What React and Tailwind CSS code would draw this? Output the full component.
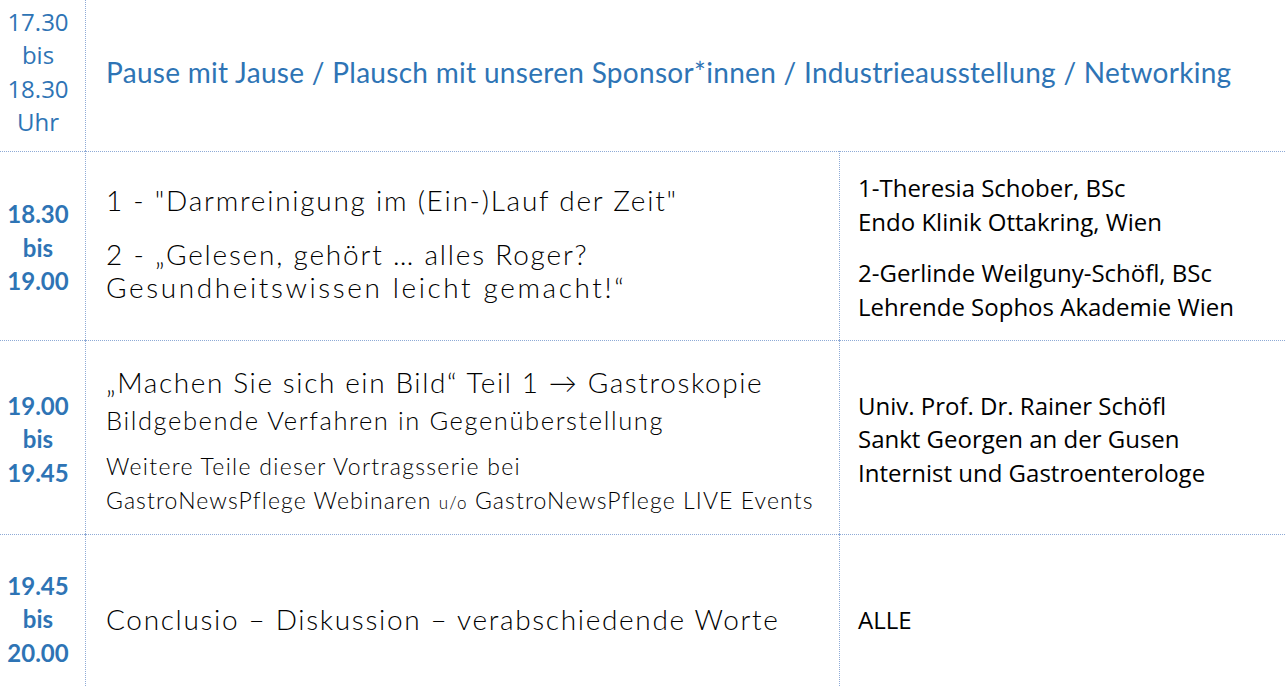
const blue = 'text-[#2e74b5]';
const line = 'border-dotted border-[#8eaad6]';
const regular = { fontFamily: '"Open Sans", Lato, sans-serif' };

function TimeCell({ lines, bold }) {
  return (
    <div
      className={`flex flex-col items-center justify-center pr-[9px] text-[24px] leading-[33.5px] ${blue} ${bold ? 'font-bold' : 'font-normal'}`}
      style={bold ? undefined : regular}
    >
      {lines.map((l, i) => (
        <span key={i}>{l}</span>
      ))}
    </div>
  );
}

export default function App() {
  return (
    <div className="h-[686px] w-[1285px] overflow-hidden bg-white text-black" style={{ fontFamily: 'Lato, "Open Sans", sans-serif' }}>
      <div className="grid grid-cols-[85px_754px_446px] grid-rows-[151px_189px_194px_166px]">
        {/* Row 1 */}
        <div className="flex items-center justify-center pb-[8px]">
          <TimeCell lines={['17.30', 'bis', '18.30', 'Uhr']} />
        </div>
        <div className={`col-span-2 flex items-center border-l ${line} pl-[20px] pb-[8px]`}>
          <span className={`text-[28px] tracking-[0.3px] ${blue}`}>
            Pause mit Jause / Plausch mit unseren Sponsor*innen / Industrieausstellung / Networking
          </span>
        </div>

        {/* Row 2 */}
        <div className={`flex items-center justify-center border-t ${line} pt-[3px]`}>
          <TimeCell lines={['18.30', 'bis', '19.00']} bold />
        </div>
        <div className={`flex flex-col justify-center gap-[21px] border-l border-t ${line} pl-[20px] pb-[5px] text-[28px] font-light leading-[33px]`}>
          <p className="tracking-[1.75px]">1 - "Darmreinigung im (Ein-)Lauf der Zeit"</p>
          <div>
            <p className="tracking-[1.8px]">2 - „Gelesen, gehört … alles Roger?</p>
            <p className="tracking-[2.6px]">Gesundheitswissen leicht gemacht!“</p>
          </div>
        </div>
        <div
          className={`flex flex-col justify-center gap-[17px] border-l border-t ${line} pl-[18px] pt-[3px] text-[24px] leading-[34px]`}
          style={regular}
        >
          <p>
            1-Theresia Schober, BSc
            <br />
            Endo Klinik Ottakring, Wien
          </p>
          <p>
            2-Gerlinde Weilguny-Schöfl, BSc
            <br />
            Lehrende Sophos Akademie Wien
          </p>
        </div>

        {/* Row 3 */}
        <div className={`flex items-center justify-center border-t ${line} pt-[3px]`}>
          <TimeCell lines={['19.00', 'bis', '19.45']} bold />
        </div>
        <div className={`flex flex-col justify-center border-l border-t ${line} pl-[20px] pt-[8px] font-light`}>
          <p className="text-[28px] leading-[37px] tracking-[1.6px]">„Machen Sie sich ein Bild“ Teil 1 → Gastroskopie</p>
          <p className="text-[25.5px] leading-[39px] tracking-[1.6px]">Bildgebende Verfahren in Gegenüberstellung</p>
          <p className="mt-[9px] text-[23px] leading-[34px] tracking-[1.3px]">Weitere Teile dieser Vortragsserie bei</p>
          <p className="text-[23px] leading-[34px] tracking-[1.1px]">
            GastroNewsPflege Webinaren <span className="text-[17px]">u/o</span> GastroNewsPflege LIVE Events
          </p>
        </div>
        <div
          className={`flex flex-col justify-center border-l border-t ${line} pl-[18px] pt-[3px] text-[24px] leading-[33.5px]`}
          style={regular}
        >
          <p>Univ. Prof. Dr. Rainer Schöfl</p>
          <p>Sankt Georgen an der Gusen</p>
          <p>Internist und Gastroenterologe</p>
        </div>

        {/* Row 4 */}
        <div className={`flex items-center justify-center border-t ${line} pt-[3px]`}>
          <TimeCell lines={['19.45', 'bis', '20.00']} bold />
        </div>
        <div className={`flex items-center border-l border-t ${line} pl-[20px] pt-[2px] text-[28px] font-light tracking-[1.67px]`}>
          <p>Conclusio – Diskussion – verabschiedende Worte</p>
        </div>
        <div className={`flex items-center border-l border-t ${line} pl-[18px] pt-[4px] text-[24px]`} style={regular}>
          <p>ALLE</p>
        </div>
      </div>
    </div>
  );
}
